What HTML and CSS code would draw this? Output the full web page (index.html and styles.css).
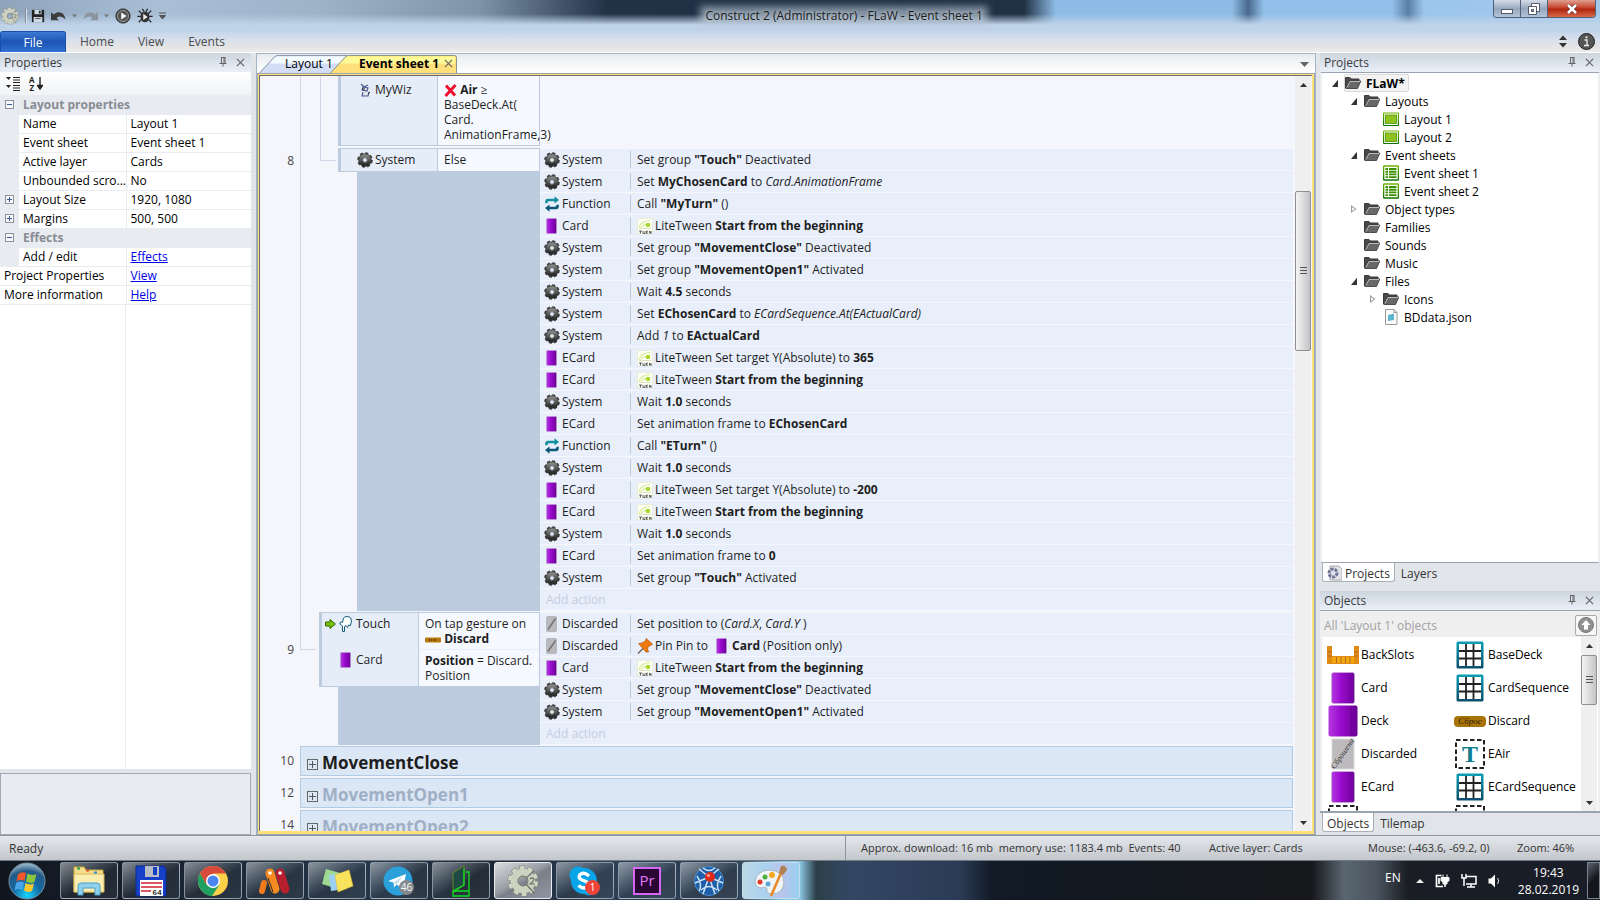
FILE: index.html
```html
<!DOCTYPE html>
<html lang="en">
<head>
    <meta charset="UTF-8">
    <meta name="viewport" content="width=device-width, initial-scale=1.0">
    <title>Construct 2 (Administrator) - FLaW - Event sheet 1</title>
    <link rel="stylesheet" href="styles.css">
</head>
<body>
    <!-- shared icons -->
    <svg class="sprite" width="0" height="0" aria-hidden="true">
        <defs>
            <linearGradient id="gPurple" x1="0" x2="1" y1="0" y2="0">
                <stop offset="0" stop-color="#b33be0"/>
                <stop offset="0.4" stop-color="#9c0ccf"/>
                <stop offset="1" stop-color="#6d0096"/>
            </linearGradient>
            <linearGradient id="gTeal" x1="0" x2="0" y1="0" y2="1">
                <stop offset="0" stop-color="#0aa0b4"/>
                <stop offset="1" stop-color="#0b4d6c"/>
            </linearGradient>
            <linearGradient id="gGear" x1="0" x2="0" y1="0" y2="1">
                <stop offset="0" stop-color="#858585"/>
                <stop offset="1" stop-color="#2c2c2c"/>
            </linearGradient>
            <linearGradient id="gGreen" x1="0" x2="0" y1="0" y2="1">
                <stop offset="0" stop-color="#6fb400"/>
                <stop offset="1" stop-color="#0f7400"/>
            </linearGradient>
            <radialGradient id="gOrb" cx="0.5" cy="0.9" r="0.9">
                <stop offset="0" stop-color="#18d4ff"/>
                <stop offset="0.45" stop-color="#1466a0"/>
                <stop offset="0.75" stop-color="#255a88"/>
                <stop offset="1" stop-color="#a8c0d2"/>
            </radialGradient>
        </defs>
        <symbol id="gear" viewBox="0 0 16 16">
            <circle cx="8" cy="8" r="6.7" fill="none" stroke="#3a3a3a" stroke-width="2.2" stroke-dasharray="3 2.26"/>
            <circle cx="8" cy="8" r="4.5" fill="none" stroke="url(#gGear)" stroke-width="4.2"/>
            <circle cx="8" cy="8" r="6.2" fill="none" stroke="#333" stroke-width="0.7"/>
            <circle cx="8" cy="8" r="2.2" fill="#e8eefa" stroke="#333" stroke-width="0.6"/>
        </symbol>
        <symbol id="gear-light" viewBox="0 0 32 32">
            <circle cx="16" cy="16" r="13" fill="none" stroke="#7d8275" stroke-width="5" stroke-dasharray="5.6 2.57"/>
            <circle cx="16" cy="16" r="13" fill="none" stroke="#d3d6c4" stroke-width="4" stroke-dasharray="4.6 3.57" stroke-dashoffset="-0.5"/>
            <circle cx="16" cy="16" r="8.5" fill="none" stroke="#cdd1bf" stroke-width="7.5"/>
            <circle cx="16" cy="16" r="5" fill="none" stroke="#6d7267" stroke-width="1"/>
            <path d="M19 13L27 6M19 19L27 28" stroke="#6c7168" stroke-width="1.2"/>
            <path d="M23 14q2-2 4 0q0 2-4 5h5" fill="none" stroke="#6d7267" stroke-width="1.2"/>
        </symbol>
        <symbol id="card" viewBox="0 0 16 16">
            <rect x="2.5" y="0.5" width="10" height="15" rx="1" fill="url(#gPurple)" stroke="#b99ac8" stroke-width="0.6"/>
        </symbol>
        <symbol id="function" viewBox="0 0 16 16">
            <path d="M1.2 7.2V5Q1.500 2.800 4 2.800H10.500V0.300L15 4L10.500 7.600V5.300H5Q3.500 5.300 3.500 7.200z" fill="#12909f"/>
            <path d="M14.800 8.800V11Q14.500 13.200 12 13.200H5.500V15.700L1 12L5.500 8.400V10.700H11Q12.500 10.700 12.500 8.800z" fill="#0c5878"/>
        </symbol>
        <symbol id="tween" viewBox="0 0 16 16">
            <rect x="0.5" y="0.5" width="15" height="15" fill="#fdfef6" stroke="#e3e8c5" stroke-dasharray="2 1"/>
            <path d="M2 9.500Q4 3 13 2.500" fill="none" stroke="#d5eb8e" stroke-width="1.2"/>
            <path d="M4 9.500Q6 6 10 6.500" fill="none" stroke="#c8e564"/>
            <rect x="9" y="5" width="4" height="4" rx="1" fill="#a6d92a"/>
            <path d="M2 10.500h12" stroke="#d5dcb5" stroke-width="0.8"/>
            <path d="M2 13h3M3.500 13v2.500M6 13v2.500h2V13M9.500 13.200H11M9.500 15.200H11M9.500 13v2.500M12.500 15.500V13l1.500 2.500V13" fill="none" stroke="#555" stroke-width="0.9"/>
        </symbol>
        <symbol id="discarded" viewBox="0 0 16 16">
            <rect x="2.5" y="0.5" width="10" height="15" rx="1" fill="#b9b9bd" stroke="#a5a5aa" stroke-width="0.6"/>
            <path d="M4 13.500L11.500 2.500" stroke="#707070" stroke-width="1.4"/>
        </symbol>
        <symbol id="pin" viewBox="0 0 16 16">
            <path d="M6.500 10L1 15.500" stroke="#6a5a50" stroke-width="1.3"/>
            <path d="M1.500 5.500L5 5L9 2.500V0.500L15.500 6L14 7.500L11.500 8L10.500 11L11.500 14L9 14z" fill="#ee7a10" stroke="#b34d04" stroke-width="0.7"/>
        </symbol>
        <symbol id="folder" viewBox="0 0 16 16">
            <path d="M0.500 13V2.500H5L6.500 4H14V6" fill="#4a4a4a" stroke="#3a3a3a"/>
            <path d="M0.800 13.500L4.500 6H15.800L12.500 13.500z" fill="#686868" stroke="#333" stroke-width="0.8"/>
            <path d="M1.800 12.500L5 6.500H15" fill="none" stroke="#d8d8d8" stroke-width="0.8"/>
        </symbol>
        <symbol id="layout" viewBox="0 0 16 16">
            <rect x="0.6" y="2" width="14.800" height="12.500" rx="0.5" fill="#fff" stroke="url(#gGreen)" stroke-width="1.2"/>
            <rect x="2.5" y="4" width="11" height="8.500" fill="#8fc31f" stroke="#4f9400" stroke-width="0.8"/>
        </symbol>
        <symbol id="sheet" viewBox="0 0 16 16">
            <rect x="0.6" y="1" width="14.800" height="14" rx="0.5" fill="#fff" stroke="url(#gGreen)" stroke-width="1.4"/>
            <path d="M2.500 4h2.500M6 4h7.500M2.500 6.700h2.500M6 6.700h7.500M2.500 9.400h2.500M6 9.400h7.500M2.500 12.100h2.500M6 12.100h7.500" stroke="#3d8f00" stroke-width="1.9"/>
        </symbol>
        <symbol id="file" viewBox="0 0 16 16">
            <path d="M2.500 0.500H11L14 3.500V15.500H2.500z" fill="#fbfbfb" stroke="#9a9a9a"/>
            <path d="M11 0.500V3.500H14" fill="none" stroke="#9a9a9a"/>
            <path d="M5 6l6-1.500v6.500l-6 1z" fill="#5db6cf"/>
        </symbol>
        <symbol id="pushpin" viewBox="0 0 8 10">
            <path d="M2.500 0.500V6M5 0.500V6M6 0.500V6M2 0.500H6.500M0.500 6.500H7.500M4 6.500V9.500" fill="none" stroke="#666" stroke-width="1"/>
        </symbol>
        <symbol id="cross" viewBox="0 0 10 10">
            <path d="M1 1L9 9M9 1L1 9" stroke="#666" stroke-width="1.3"/>
        </symbol>
        <symbol id="array" viewBox="0 0 28 28">
            <rect x="0.5" y="0.5" width="27" height="27" rx="1.5" fill="url(#gTeal)"/>
            <rect x="3" y="3" width="22" height="22" fill="#fff"/>
            <path d="M10 3V25M17.500 3V25M3 10H25M3 17.500H25" stroke="#222" stroke-width="1.8"/>
        </symbol>
        <symbol id="card-big" viewBox="0 0 32 32">
            <rect x="4.5" y="0.5" width="23" height="31" rx="2" fill="url(#gPurple)" stroke="#c9b3d4" stroke-width="0.6"/>
        </symbol>
    </svg>

    <div class="window">
        <header class="titlebar">
            <div class="quick">
                <svg class="app-gear" width="18" height="18"><use href="#gear-light"/></svg>
                <span class="quick-sep"></span>
                <button type="button" aria-label="Save"><svg width="14" height="14" viewBox="0 0 16 16"><path d="M1 1h14v14H1z" fill="#222"/><path d="M4 1h8v5H4zM3 9h10v6H3z" fill="#ccd8e4"/><path d="M9 2h2v3H9zM5 10.500h6v1H5z" fill="#222"/></svg></button>
                <button type="button" aria-label="Undo"><svg width="15" height="12" viewBox="0 0 16 12"><path d="M0 2v8.500h8.500L6 8Q10 4.500 15.500 9.500Q14 1.500 7.500 2Q5 2.200 3 4.500z" fill="#3c3c3c"/></svg></button>
                <button type="button" aria-label="Undo list"><svg width="5" height="4" viewBox="0 0 5 4"><path d="M0 0.500h5L2.500 3.500z" fill="#777"/></svg></button>
                <button type="button" aria-label="Redo"><svg width="15" height="12" viewBox="0 0 16 12"><path d="M16 2v8.500H7.500L10 8Q6 4.500 0.500 9.500Q2 1.500 8.500 2Q11 2.200 13 4.500z" fill="#8c959d"/></svg></button>
                <button type="button" aria-label="Redo list"><svg width="5" height="4" viewBox="0 0 5 4"><path d="M0 0.500h5L2.500 3.500z" fill="#777"/></svg></button>
                <button type="button" aria-label="Run"><svg width="16" height="16" viewBox="0 0 18 18"><circle cx="9" cy="9" r="8" fill="#555" stroke="#222"/><circle cx="9" cy="9" r="6.200" fill="none" stroke="#999"/><path d="M7 5L13 9L7 13z" fill="#fff"/></svg></button>
                <button type="button" aria-label="Debug"><svg width="16" height="16" viewBox="0 0 18 18"><path d="M2 3l4 4M16 3l-4 4M0.500 9.500H5M17.500 9.500H13M2 16l4-4M16 16l-4-4M6 1l2 3M12 1l-2 3" stroke="#222" stroke-width="1.3"/><ellipse cx="9" cy="10" rx="5" ry="6" fill="#333"/><path d="M7 6.500l5 3.500-5 3.500z" fill="#eee"/></svg></button>
                <button type="button" class="customize" aria-label="Customize"><svg width="7" height="8" viewBox="0 0 7 8"><path d="M0 1h7M0.500 3.500h6L3.500 7z" fill="#555" stroke="#555"/></svg></button>
            </div>
            <h1>Construct 2 (Administrator) - FLaW - Event sheet 1</h1>
            <div class="win-buttons">
                <button type="button" aria-label="Minimize"><svg width="12" height="12" viewBox="0 0 12 12"><rect x="0.5" y="6.5" width="11" height="4" fill="#fff" stroke="#555a6e"/></svg></button>
                <button type="button" aria-label="Restore"><svg width="12" height="12" viewBox="0 0 12 12"><path d="M3.500 0.500h8v8h-8z" fill="#fff" stroke="#555a6e"/><path d="M0.500 3.500h8v8h-8z" fill="#fff" stroke="#555a6e"/><path d="M3.500 6.500h2v2h-2z" fill="#8f99ad" stroke="#555a6e"/></svg></button>
                <button type="button" class="win-close" aria-label="Close"><svg width="12" height="10" viewBox="0 0 12 10"><path d="M2 1L10 9M10 1L2 9" stroke="#5b2b2b" stroke-width="4"/><path d="M2 1L10 9M10 1L2 9" stroke="#fff" stroke-width="2.6"/></svg></button>
            </div>
        </header>

        <nav class="ribbon">
            <button type="button" class="file-tab">File</button>
            <button type="button" class="ribbon-tab">Home</button>
            <button type="button" class="ribbon-tab">View</button>
            <button type="button" class="ribbon-tab">Events</button>
            <div class="ribbon-right">
                <svg width="8" height="13" viewBox="0 0 8 13"><path d="M0 5L4 0.500L8 5zM0 8L4 12.500L8 8z" fill="#333"/></svg>
                <button type="button" aria-label="About"><svg width="17" height="17" viewBox="0 0 17 17"><circle cx="8.500" cy="8.500" r="8" fill="#555" stroke="#222"/><path d="M6.500 7h2.500v5.500M6 12.500h5" fill="none" stroke="#eee" stroke-width="1.3"/><circle cx="8.500" cy="4.300" r="1.100" fill="#eee"/></svg></button>
            </div>
        </nav>

        <main class="workspace">
            <aside class="left">
                <div class="panel-head">
                    <h2>Properties</h2>
                    <button type="button" aria-label="Pin"><svg width="8" height="10"><use href="#pushpin"/></svg></button>
                    <button type="button" aria-label="Close"><svg width="9" height="9"><use href="#cross"/></svg></button>
                </div>
                <div class="prop-tools">
                    <button type="button" aria-label="Categorized"><svg width="15" height="15" viewBox="0 0 15 15"><path d="M0 1h5L2.500 4zM0 9h5L2.500 12z" fill="#222"/><path d="M7 1.500h7M7 4h7M7 6.500h7M7 9.500h7M7 12h7M7 14.500h7" stroke="#222" stroke-width="1.1"/></svg></button>
                    <button type="button" class="az" aria-label="Sort"><span>A<br>Z</span><svg width="6" height="13" viewBox="0 0 6 13"><path d="M3 0v10M0.500 8.500h5L3 12z" stroke="#222" stroke-width="1.4" fill="#222"/></svg></button>
                </div>
                <table class="props">
                    <colgroup><col class="col-toggle"><col class="col-name"><col></colgroup>
                    <tbody>
                        <tr class="group"><td class="tog"><i class="toggle minus"></i></td><th colspan="2">Layout properties</th></tr>
                        <tr><td class="tog"></td><th>Name</th><td>Layout 1</td></tr>
                        <tr><td class="tog"></td><th>Event sheet</th><td>Event sheet 1</td></tr>
                        <tr><td class="tog"></td><th>Active layer</th><td>Cards</td></tr>
                        <tr><td class="tog"></td><th>Unbounded scro...</th><td>No</td></tr>
                        <tr><td class="tog"><i class="toggle plus"></i></td><th>Layout Size</th><td>1920, 1080</td></tr>
                        <tr><td class="tog"><i class="toggle plus"></i></td><th>Margins</th><td>500, 500</td></tr>
                        <tr class="group"><td class="tog"><i class="toggle minus"></i></td><th colspan="2">Effects</th></tr>
                        <tr><td class="tog"></td><th>Add / edit</th><td><a href="#">Effects</a></td></tr>
                        <tr><th colspan="2">Project Properties</th><td><a href="#">View</a></td></tr>
                        <tr><th colspan="2">More information</th><td><a href="#">Help</a></td></tr>
                    </tbody>
                </table>
                <div class="props-rest"></div>
                <div class="props-help"></div>
            </aside>

            <section class="center">
                <div class="doc-tabs">
                    <button type="button" class="doc-tab">
                        <svg class="tab-shape" viewBox="0 0 88 19" preserveAspectRatio="none"><path d="M0.500 19L15 2.500Q17 0.500 19 0.500H88V19" fill="#d3def6" stroke="#8a93a5"/><path d="M14 5L17 1.500H88V9H10z" fill="#f4fbff"/></svg>
                        <span>Layout 1</span>
                    </button>
                    <button type="button" class="doc-tab active">
                        <svg class="tab-shape" viewBox="0 0 127 19" preserveAspectRatio="none"><path d="M0.500 19L15 2.500Q17 0.500 19 0.500H124.500Q126.500 0.500 126.500 2.500V19" fill="#ffe07a" stroke="#8a8f86"/><path d="M13 6L17 1.500H125V9H10z" fill="#fffb98"/></svg>
                        <span>Event sheet 1</span>
                        <svg class="tab-x" width="9" height="9"><use href="#cross"/></svg>
                    </button>
                    <button type="button" class="tab-list" aria-label="Tabs"><svg width="9" height="5" viewBox="0 0 9 5"><path d="M0 0h9L4.500 5z" fill="#666"/></svg></button>
                </div>
                <div class="doc-frame">
                    <div class="sheet">
                        <div class="event">
                            <div class="event-left">
                                <div class="event-head">
                                    <span class="num"></span><span class="rail"></span><span class="rail short"></span>
                                    <div class="conds cut">
                                        <div class="cond">
                                            <div class="obj"><svg width="16" height="16" viewBox="0 0 16 16"><path d="M4 2l3 3 4-2M6 5l5 1-1 3-5-1zM6 10l-1 4h6l1-4" fill="#dfe3ee" stroke="#4a5a8c" stroke-width="1.1"/><path d="M5 7h3M11 12l2-2" stroke="#222"/></svg>MyWiz</div>
                                            <div class="cond-text"><svg width="13" height="13" viewBox="0 0 13 13"><path d="M2 1.500L11 11.500M11.500 1L1.500 12" stroke="#f01030" stroke-width="3"/></svg> <b>Air</b> ≥<br>BaseDeck.At(<br>Card.<br>AnimationFrame,3)</div>
                                        </div>
                                    </div>
                                </div>
                            </div>
                        </div>

                        <div class="event">
                            <div class="event-left">
                                <div class="event-head">
                                    <span class="num">8</span><span class="rail"></span><span class="elbow"></span>
                                    <div class="conds">
                                        <div class="cond">
                                            <div class="obj"><svg width="16" height="16"><use href="#gear"/></svg>System</div>
                                            <div class="cond-text">Else</div>
                                        </div>
                                    </div>
                                </div>
                                <div class="event-fill deep"></div>
                            </div>
                            <ul class="actions">
                                <li><span class="obj"><svg width="16" height="16"><use href="#gear"/></svg>System</span><span class="act">Set group <b>"Touch"</b> Deactivated</span></li>
                                <li><span class="obj"><svg width="16" height="16"><use href="#gear"/></svg>System</span><span class="act">Set <b>MyChosenCard</b> to <i>Card.AnimationFrame</i></span></li>
                                <li><span class="obj"><svg width="16" height="16"><use href="#function"/></svg>Function</span><span class="act">Call <b>"MyTurn"</b> ()</span></li>
                                <li><span class="obj"><svg width="16" height="16"><use href="#card"/></svg>Card</span><span class="act"><svg width="16" height="16"><use href="#tween"/></svg>LiteTween <b>Start from the beginning</b></span></li>
                                <li><span class="obj"><svg width="16" height="16"><use href="#gear"/></svg>System</span><span class="act">Set group <b>"MovementClose"</b> Deactivated</span></li>
                                <li><span class="obj"><svg width="16" height="16"><use href="#gear"/></svg>System</span><span class="act">Set group <b>"MovementOpen1"</b> Activated</span></li>
                                <li><span class="obj"><svg width="16" height="16"><use href="#gear"/></svg>System</span><span class="act">Wait <b>4.5</b> seconds</span></li>
                                <li><span class="obj"><svg width="16" height="16"><use href="#gear"/></svg>System</span><span class="act">Set <b>EChosenCard</b> to <i>ECardSequence.At(EActualCard)</i></span></li>
                                <li><span class="obj"><svg width="16" height="16"><use href="#gear"/></svg>System</span><span class="act">Add <i>1</i> to <b>EActualCard</b></span></li>
                                <li><span class="obj"><svg width="16" height="16"><use href="#card"/></svg>ECard</span><span class="act"><svg width="16" height="16"><use href="#tween"/></svg>LiteTween Set target Y(Absolute) to <b>365</b></span></li>
                                <li><span class="obj"><svg width="16" height="16"><use href="#card"/></svg>ECard</span><span class="act"><svg width="16" height="16"><use href="#tween"/></svg>LiteTween <b>Start from the beginning</b></span></li>
                                <li><span class="obj"><svg width="16" height="16"><use href="#gear"/></svg>System</span><span class="act">Wait <b>1.0</b> seconds</span></li>
                                <li><span class="obj"><svg width="16" height="16"><use href="#card"/></svg>ECard</span><span class="act">Set animation frame to <b>EChosenCard</b></span></li>
                                <li><span class="obj"><svg width="16" height="16"><use href="#function"/></svg>Function</span><span class="act">Call <b>"ETurn"</b> ()</span></li>
                                <li><span class="obj"><svg width="16" height="16"><use href="#gear"/></svg>System</span><span class="act">Wait <b>1.0</b> seconds</span></li>
                                <li><span class="obj"><svg width="16" height="16"><use href="#card"/></svg>ECard</span><span class="act"><svg width="16" height="16"><use href="#tween"/></svg>LiteTween Set target Y(Absolute) to <b>-200</b></span></li>
                                <li><span class="obj"><svg width="16" height="16"><use href="#card"/></svg>ECard</span><span class="act"><svg width="16" height="16"><use href="#tween"/></svg>LiteTween <b>Start from the beginning</b></span></li>
                                <li><span class="obj"><svg width="16" height="16"><use href="#gear"/></svg>System</span><span class="act">Wait <b>1.0</b> seconds</span></li>
                                <li><span class="obj"><svg width="16" height="16"><use href="#card"/></svg>ECard</span><span class="act">Set animation frame to <b>0</b></span></li>
                                <li><span class="obj"><svg width="16" height="16"><use href="#gear"/></svg>System</span><span class="act">Set group <b>"Touch"</b> Activated</span></li>
                                <li><button type="button" class="add">Add action</button></li>
                            </ul>
                        </div>

                        <div class="event">
                            <div class="event-left">
                                <div class="event-head">
                                    <span class="num">9</span><span class="elbow long"></span>
                                    <div class="conds">
                                        <div class="cond">
                                            <div class="obj trigger"><svg class="arrow" width="11" height="10" viewBox="0 0 11 10"><path d="M0.500 3H5V0.500L10.500 5L5 9.500V7H0.500z" fill="#7cc010" stroke="#2f6b00"/></svg><svg width="16" height="16" viewBox="0 0 16 16"><path d="M4.500 15.500V10L2 8Q1.500 6 3.500 6L4.500 6.500L5.500 2Q6 0.500 10 0.500Q13.500 1 13.500 5L12.500 9.500L10.500 9L9.500 11.500L8 9.500L6.500 10.500V15.500z" fill="#fff" stroke="#175f7c"/></svg>Touch</div>
                                            <div class="cond-text">On tap gesture on<br><svg width="16" height="6" viewBox="0 0 16 6"><rect y="0.5" width="16" height="5" rx="1" fill="#b57a08"/><path d="M4 3h8" stroke="#4a3000" stroke-width="1.5" stroke-dasharray="1 1"/></svg> <b>Discard</b></div>
                                        </div>
                                        <div class="cond">
                                            <div class="obj"><svg width="16" height="16"><use href="#card"/></svg>Card</div>
                                            <div class="cond-text"><b>Position</b> = Discard.<br>Position</div>
                                        </div>
                                    </div>
                                </div>
                                <div class="event-fill"></div>
                            </div>
                            <ul class="actions">
                                <li><span class="obj"><svg width="16" height="16"><use href="#discarded"/></svg>Discarded</span><span class="act">Set position to (<i>Card.X</i>, <i>Card.Y</i> )</span></li>
                                <li><span class="obj"><svg width="16" height="16"><use href="#discarded"/></svg>Discarded</span><span class="act"><svg width="16" height="16"><use href="#pin"/></svg>Pin Pin to <svg class="mid" width="16" height="16"><use href="#card"/></svg> <b>Card</b> (Position only)</span></li>
                                <li><span class="obj"><svg width="16" height="16"><use href="#card"/></svg>Card</span><span class="act"><svg width="16" height="16"><use href="#tween"/></svg>LiteTween <b>Start from the beginning</b></span></li>
                                <li><span class="obj"><svg width="16" height="16"><use href="#gear"/></svg>System</span><span class="act">Set group <b>"MovementClose"</b> Deactivated</span></li>
                                <li><span class="obj"><svg width="16" height="16"><use href="#gear"/></svg>System</span><span class="act">Set group <b>"MovementOpen1"</b> Activated</span></li>
                                <li><button type="button" class="add">Add action</button></li>
                            </ul>
                        </div>

                        <div class="group-row"><span class="num">10</span><h3><i class="plus-box"></i>MovementClose</h3></div>
                        <div class="group-row off"><span class="num">12</span><h3><i class="plus-box"></i>MovementOpen1</h3></div>
                        <div class="group-row off"><span class="num">14</span><h3><i class="plus-box"></i>MovementOpen2</h3></div>
                    </div>
                    <div class="scroll">
                        <button type="button" aria-label="Up"><svg width="7" height="4" viewBox="0 0 7 4"><path d="M0 4L3.500 0L7 4z" fill="#333"/></svg></button>
                        <div class="track"><div class="thumb"><i></i></div></div>
                        <button type="button" aria-label="Down"><svg width="7" height="4" viewBox="0 0 7 4"><path d="M0 0L3.500 4L7 0z" fill="#333"/></svg></button>
                    </div>
                </div>
            </section>

            <aside class="right">
                <section class="projects">
                    <div class="panel-head">
                        <h2>Projects</h2>
                        <button type="button" aria-label="Pin"><svg width="8" height="10"><use href="#pushpin"/></svg></button>
                        <button type="button" aria-label="Close"><svg width="9" height="9"><use href="#cross"/></svg></button>
                    </div>
                    <ul class="tree">
                        <li class="root"><i class="tri open"></i><span><svg width="16" height="16"><use href="#folder"/></svg>FLaW*</span></li>
                        <li class="lv1"><i class="tri open"></i><span><svg width="16" height="16"><use href="#folder"/></svg>Layouts</span></li>
                        <li class="lv2"><i class="tri"></i><span><svg width="16" height="16"><use href="#layout"/></svg>Layout 1</span></li>
                        <li class="lv2"><i class="tri"></i><span><svg width="16" height="16"><use href="#layout"/></svg>Layout 2</span></li>
                        <li class="lv1"><i class="tri open"></i><span><svg width="16" height="16"><use href="#folder"/></svg>Event sheets</span></li>
                        <li class="lv2"><i class="tri"></i><span><svg width="16" height="16"><use href="#sheet"/></svg>Event sheet 1</span></li>
                        <li class="lv2"><i class="tri"></i><span><svg width="16" height="16"><use href="#sheet"/></svg>Event sheet 2</span></li>
                        <li class="lv1"><i class="tri shut"></i><span><svg width="16" height="16"><use href="#folder"/></svg>Object types</span></li>
                        <li class="lv1"><i class="tri"></i><span><svg width="16" height="16"><use href="#folder"/></svg>Families</span></li>
                        <li class="lv1"><i class="tri"></i><span><svg width="16" height="16"><use href="#folder"/></svg>Sounds</span></li>
                        <li class="lv1"><i class="tri"></i><span><svg width="16" height="16"><use href="#folder"/></svg>Music</span></li>
                        <li class="lv1"><i class="tri open"></i><span><svg width="16" height="16"><use href="#folder"/></svg>Files</span></li>
                        <li class="lv2"><i class="tri shut"></i><span><svg width="16" height="16"><use href="#folder"/></svg>Icons</span></li>
                        <li class="lv2"><i class="tri"></i><span><svg width="16" height="16"><use href="#file"/></svg>BDdata.json</span></li>
                    </ul>
                    <div class="pane-tabs">
                        <button type="button" class="on"><svg width="15" height="16" viewBox="0 0 15 16"><path d="M3 1h9l3 3v11H3z" fill="#e4e4e8" stroke="#aaa"/><circle cx="6" cy="8" r="4" fill="none" stroke="#6e7398" stroke-width="3" stroke-dasharray="3 1"/><circle cx="6" cy="8" r="1.500" fill="#dde"/></svg>Projects</button>
                        <button type="button">Layers</button>
                    </div>
                </section>

                <section class="objects">
                    <div class="panel-head">
                        <h2>Objects</h2>
                        <button type="button" aria-label="Pin"><svg width="8" height="10"><use href="#pushpin"/></svg></button>
                        <button type="button" aria-label="Close"><svg width="9" height="9"><use href="#cross"/></svg></button>
                    </div>
                    <div class="obj-body">
                        <div class="filter">
                            <span>All 'Layout 1' objects</span>
                            <button type="button" aria-label="Up one level"><svg width="16" height="16" viewBox="0 0 16 16"><circle cx="8" cy="8" r="7.500" fill="#909090" stroke="#777"/><path d="M8 3L12.500 8H10V12.500H6V8H3.500z" fill="#fff"/></svg></button>
                        </div>
                        <div class="obj-list">
                            <div class="obj-grid">
                                <div class="cell"><svg width="32" height="32" viewBox="0 0 32 32"><path d="M0 7H5V17H27V7H32V25H0z" fill="#e08c14"/><path d="M5 18H27V24H5z" fill="#f2a80c"/><path d="M9.500 18v6M14 18v6M18.500 18v6M23 18v6M0 13h5M27 13h5M0 17h5M27 17h5" stroke="#b06a30"/></svg>BackSlots</div>
                                <div class="cell"><svg width="32" height="32" viewBox="-2 -2 32 32"><use href="#array" width="28" height="28"/></svg>BaseDeck</div>
                                <div class="cell"><svg width="32" height="32"><use href="#card-big"/></svg>Card</div>
                                <div class="cell"><svg width="32" height="32" viewBox="-2 -2 32 32"><use href="#array" width="28" height="28"/></svg>CardSequence</div>
                                <div class="cell"><svg width="32" height="32" viewBox="0 0 32 32"><rect x="1.5" y="0.5" width="29" height="31" rx="2" fill="url(#gPurple)"/><path d="M24 1v30M27 1v30" stroke="#5d0085" stroke-width="0.8"/></svg>Deck</div>
                                <div class="cell"><svg width="32" height="32" viewBox="0 0 32 32"><rect y="11" width="32" height="11" rx="4" fill="#a87408"/><text x="16" y="19" class="sbros">Сброс</text></svg>Discard</div>
                                <div class="cell"><svg width="32" height="32" viewBox="0 0 32 32"><rect x="5" y="1" width="22" height="30" fill="#bcbabd" stroke="#d8d6d9"/><text x="16" y="18" class="sbros small" transform="rotate(-55 16 16)">Сброшена</text></svg>Discarded</div>
                                <div class="cell"><svg width="32" height="32" viewBox="0 0 32 32"><rect x="2" y="2" width="28" height="28" fill="none" stroke="#222" stroke-width="2" stroke-dasharray="4.500 2.500"/><text x="16" y="24" class="big-t">T</text></svg>EAir</div>
                                <div class="cell"><svg width="32" height="32"><use href="#card-big"/></svg>ECard</div>
                                <div class="cell"><svg width="32" height="32" viewBox="-2 -2 32 32"><use href="#array" width="28" height="28"/></svg>ECardSequence</div>
                                <div class="cell"><svg width="32" height="32" viewBox="0 0 32 32"><rect x="2" y="2" width="28" height="28" fill="none" stroke="#222" stroke-width="2" stroke-dasharray="4.500 2.500"/></svg></div>
                                <div class="cell"><svg width="32" height="32" viewBox="0 0 32 32"><rect x="2" y="2" width="28" height="28" fill="none" stroke="#222" stroke-width="2" stroke-dasharray="4.500 2.500"/></svg></div>
                            </div>
                            <div class="scroll">
                                <button type="button" aria-label="Up"><svg width="7" height="4" viewBox="0 0 7 4"><path d="M0 4L3.500 0L7 4z" fill="#333"/></svg></button>
                                <div class="track"><div class="thumb small"><i></i></div></div>
                                <button type="button" aria-label="Down"><svg width="7" height="4" viewBox="0 0 7 4"><path d="M0 0L3.500 4L7 0z" fill="#333"/></svg></button>
                            </div>
                        </div>
                    </div>
                    <div class="pane-tabs">
                        <button type="button" class="on">Objects</button>
                        <button type="button">Tilemap</button>
                    </div>
                </section>
            </aside>
        </main>

        <footer class="status">
            <span class="ready">Ready</span>
            <span class="stat memory">Approx. download: 16 mb&nbsp; memory use: 1183.4 mb&nbsp; Events: 40</span>
            <span class="stat layer">Active layer: Cards</span>
            <span class="stat mouse">Mouse: (-463.6, -69.2, 0)</span>
            <span class="stat zoom">Zoom: 46%</span>
        </footer>

        <div class="taskbar">
            <button type="button" class="start" aria-label="Start"><svg width="38" height="38" viewBox="0 0 38 38"><circle cx="19" cy="19" r="18" fill="url(#gOrb)" stroke="#7890a4"/><path d="M10 12q4-3 8-1l-1.500 8q-4-2-8 0.500z" fill="#f0582a"/><path d="M19.500 11.500q4 2.500 9 0.500l-2 8q-4 2-8.500-0.500z" fill="#8cc63a"/><path d="M8 21q4-2.500 8-0.500l-1.500 7.500q-4-2-8 0.500z" fill="#4aa5e8"/><path d="M17.500 21q4 2.500 8.500 0.500l-2 7.500q-4 2-8-0.500z" fill="#fcc72c"/></svg></button>
            <button type="button" class="task" aria-label="Explorer"><svg width="34" height="32" viewBox="0 0 34 32"><path d="M2 2h10l2 3h17v22H2z" fill="#f5df8c" stroke="#c9a43c"/><path d="M2 9h30v18H2z" fill="#fbeeb0" stroke="#d8b85a"/><path d="M5 3.500h3" stroke="#1ea03a" stroke-width="2"/><path d="M14 5.500h3" stroke="#e04a28" stroke-width="2"/><path d="M22 7.500h3" stroke="#2890e0" stroke-width="2"/><path d="M6 30V21Q6 18 9 18H25Q28 18 28 21V30H23V23H11V30z" fill="#8fd0ec" stroke="#4c9ec8"/></svg></button>
            <button type="button" class="task" aria-label="Total Commander"><svg width="32" height="32" viewBox="0 0 32 32"><path d="M1 1h28l2 3v27H1z" fill="#1740c8" stroke="#0c2a8c"/><path d="M10 1h14v11H10z" fill="#b8bcc4"/><path d="M18 2h4v8h-4z" fill="#1740c8"/><path d="M5 15h23v16H5z" fill="#fff"/><path d="M6 18h21M6 22h21M6 26h10" stroke="#d0202c" stroke-width="1.3"/><text x="22" y="30" class="t64">64</text></svg></button>
            <button type="button" class="task" aria-label="Chrome"><svg width="30" height="30" viewBox="0 0 30 30"><circle cx="15" cy="15" r="15" fill="#fdd04a"/><path d="M2 7.500A15 15 0 0 1 28 7.500H15L8.500 18.700z" fill="#d84a3c"/><path d="M2 7.500A15 15 0 0 0 14 30L21.500 18.700H8.500z" fill="#20a060"/><circle cx="15" cy="15" r="7" fill="#fff"/><circle cx="15" cy="15" r="5.500" fill="#4a85ee"/></svg></button>
            <button type="button" class="task" aria-label="Mail"><svg width="32" height="28" viewBox="0 0 32 28"><path d="M5 16L3 24" stroke="#ee7c1c" stroke-width="6" stroke-linecap="round"/><path d="M11 6L16 22" stroke="#f58a20" stroke-width="9" stroke-linecap="round"/><path d="M9 11L14 25" stroke="#2b2a2c" stroke-width="1"/><path d="M21 6L26 22" stroke="#b51f2e" stroke-width="9" stroke-linecap="round"/><circle cx="11" cy="6" r="1.800" fill="#fff"/><circle cx="21" cy="6" r="1.800" fill="#fff"/></svg></button>
            <button type="button" class="task" aria-label="Sticky notes"><svg width="34" height="28" viewBox="0 0 34 28"><path d="M6 2l14 4-5 15-13-4z" fill="#9fd890"/><path d="M9 8l14-2 2 16-14 2z" fill="#9cd0f2"/><path d="M15 8l14-5 4 16-15 6z" fill="#f8e45c" stroke="#e0c238" stroke-width="0.6"/></svg></button>
            <button type="button" class="task" aria-label="Telegram"><svg width="32" height="30" viewBox="0 0 32 30"><circle cx="15" cy="15" r="14.500" fill="#2ba0da"/><path d="M5 15L23 8L20 23L13.500 18.500L11 21.500L10.500 16.500z" fill="#fff"/><path d="M10.500 16.500L20 10L13.500 18.500" fill="#c5dfee"/></svg><span class="badge grey">46</span></button>
            <button type="button" class="task" aria-label="Books"><svg width="20" height="32" viewBox="0 0 20 32"><path d="M2 8L13 1V20L2 28z" fill="#1f4a44" stroke="#5a8a20"/><path d="M15 7h3v19H2l11-6V4M2 26v5h16v-5" fill="none" stroke="#10e020" stroke-width="1.3"/></svg></button>
            <button type="button" class="task lit" aria-label="Construct 2"><svg width="32" height="32"><use href="#gear-light"/></svg></button>
            <button type="button" class="task" aria-label="Skype"><svg width="32" height="30" viewBox="0 0 32 30"><circle cx="9" cy="9" r="8.500" fill="#0aa5e8"/><circle cx="20" cy="21" r="8.500" fill="#0aa5e8"/><circle cx="15" cy="15" r="13" fill="#0aa5e8"/><path d="M20 10Q15 5.500 11 8.500Q8.500 12 13 14L17 15.500Q21 18 18 21Q14 23.500 9.500 19.500" fill="none" stroke="#fff" stroke-width="3.4"/></svg><span class="badge red">1</span></button>
            <button type="button" class="task" aria-label="Premiere"><span class="pr">Pr</span></button>
            <button type="button" class="task" aria-label="Browser"><svg width="32" height="32" viewBox="0 0 32 32"><circle cx="16" cy="16" r="14.500" fill="#1c5ea8" stroke="#4a8fd0"/><path d="M16 12L6 4M16 12L26 4M16 12L2 18M16 12L30 18M16 12L10 29M16 12L22 29M4 11Q10 20 6 26M28 11Q22 20 26 26M8 25Q16 18 24 25M10 3Q16 8 22 3" fill="none" stroke="#cfe2f4" stroke-width="1.5"/><circle cx="17" cy="12" r="5" fill="#e02818"/><circle cx="15.500" cy="10.500" r="1.600" fill="#ff9a8a"/></svg></button>
            <button type="button" class="task paint" aria-label="Paint"><svg width="34" height="32" viewBox="0 0 34 32"><path d="M14 5Q30 5 30 18Q29 29 17 29Q12 28 13 24Q12 21 8 23Q1 23 1 16Q3 6 14 5z" fill="#eef4f8" stroke="#a8b4c0"/><circle cx="6" cy="17" r="2.500" fill="#e03a28"/><circle cx="11" cy="12" r="2.500" fill="#4eb03a"/><circle cx="18" cy="10" r="3" fill="#f5a81c"/><circle cx="14" cy="19" r="2.500" fill="#5aa8d8"/><path d="M17 31L27 8" stroke="#e88a28" stroke-width="2.6"/><path d="M25 8L27 1Q32 0 33 5L29 10z" fill="#b08050"/></svg></button>
            <div class="tray">
                <span class="lang">EN</span>
                <svg width="8" height="4" viewBox="0 0 8 4"><path d="M0 4L4 0L8 4z" fill="#eee"/></svg>
                <svg width="15" height="15" viewBox="0 0 15 15"><path d="M6.500 2.500H1.500V13.500H8M4 5v6" fill="none" stroke="#fff" stroke-width="1.7"/><path d="M6 4.500h8v3l-2 2v1.500h-4v-1.500L6 7.500zM8 1.500v3M12 1.500v3" fill="#fff" stroke="#fff"/><path d="M10 10v4" stroke="#fff" stroke-width="1.5"/></svg>
                <svg width="16" height="15" viewBox="0 0 16 15"><path d="M5.500 3.500H15V11H5M10 11v3M6 14h8M1 1v4h4V1M3 5v8" fill="none" stroke="#fff" stroke-width="1.5"/></svg>
                <svg width="13" height="14" viewBox="0 0 13 14"><path d="M0.500 4.500H3L7 0.500V13.500L3 9.500H0.500z" fill="#fff"/><path d="M9.500 4Q12 7 9.500 10" fill="none" stroke="#ddd"/></svg>
                <div class="clock"><time>19:43</time><time>28.02.2019</time></div>
                <button type="button" class="show-desktop" aria-label="Show desktop"></button>
            </div>
        </div>
    </div>
</body>
</html>
```
FILE: styles.css
```css
* {
    box-sizing: border-box;
}

body {
    margin: 0;
    font-family: "Open Sans", "Noto Sans", sans-serif;
    font-size: 12px;
    line-height: 15px;
    color: #1e1e1e;
    background-color: #dfe3e8;
}

button {
    margin: 0;
    padding: 0;
    border: none;
    background: none;
    font: inherit;
    color: inherit;
    cursor: pointer;
}

h1, h2, h3, ul {
    margin: 0;
    padding: 0;
    font-size: 12px;
    font-weight: normal;
    list-style: none;
}

svg {
    display: block;
    flex-shrink: 0;
}

.sprite {
    position: absolute;
}

.window {
    display: flex;
    flex-direction: column;
    height: 100vh;
    overflow: hidden;
    background-color: #e1e5e9;
}

/* title bar and ribbon */

.titlebar {
    display: grid;
    grid-template-columns: 8fr auto 7fr;
    height: 31px;
    background:
        linear-gradient(to bottom, rgba(199, 217, 236, 0) 45%, #bfd3e9 80%),
        linear-gradient(to right, #8fa4bb 0, #a9bfd6 10%, #9eb2c8 20%, #7e92a8 30%, #203246 38%, #1f3144 64%, #8fbce6 66%, #8fbce6 77%, #48698c 78%, #92c0ea 79%, #92c0ea 87%, #5a80a8 88%, #9cc6ee 89%, #a4c8ea 100%);
}

.quick {
    display: flex;
    align-items: center;
    gap: 6px;
    padding-left: 1px;
}

.quick-sep {
    width: 2px;
    height: 14px;
    margin-right: -2px;
    border-left: 1px solid #7d8a98;
    border-right: 1px solid #dce5ee;
}

.titlebar h1 {
    align-self: center;
    color: #1b1b1b;
    line-height: 10px;
    background: rgba(190, 203, 217, 0.6);
    box-shadow: 0 0 7px 5px rgba(190, 203, 217, 0.6);
    text-shadow: 0 0 4px #d7e1ec;
}

.win-buttons {
    display: flex;
    justify-self: end;
    align-self: start;
    height: 18px;
    margin-right: 4px;
    border: 1px solid #50607a;
    border-top: none;
    border-radius: 0 0 4px 4px;
    overflow: hidden;
}

.win-buttons button {
    display: grid;
    place-items: center;
    width: 27px;
    background: linear-gradient(#d4dde8, #98a8bc 50%, #b4c4d8);
    border-right: 1px solid #50607a;
}

.win-buttons .win-close {
    width: 47px;
    border-right: none;
    background: linear-gradient(#e0a090, #c8442c 45%, #b02810 55%, #d86848);
}

.ribbon {
    display: flex;
    align-items: flex-end;
    height: 22px;
    background: linear-gradient(#c3d5ea, #d9e1ec 45%, #e4e4e4 75%, #ececec);
    border-bottom: 1px solid #fff;
    color: #4b4b4b;
}

.ribbon button {
    height: 21px;
}

.ribbon .file-tab {
    width: 66px;
    border: 1px solid #1a4fae;
    border-bottom: none;
    border-radius: 3px 3px 0 0;
    background: linear-gradient(#3c7ad4, #1d54b4 50%, #2f72d2);
    color: #fff;
}

.ribbon-tab {
    padding: 0 12px;
}

.file-tab + .ribbon-tab {
    padding-left: 14px;
}

.ribbon-right {
    display: flex;
    align-items: center;
    gap: 11px;
    margin-left: auto;
    padding-right: 5px;
}

/* panels */

.workspace {
    display: grid;
    grid-template-columns: 251px 1fr 280px;
    flex: 1;
    min-height: 0;
    background-color: #e1e5e9;
}

.left, .right, .center, .projects, .objects {
    display: flex;
    flex-direction: column;
    min-width: 0;
    min-height: 0;
}

.panel-head {
    display: flex;
    align-items: center;
    gap: 9px;
    height: 19px;
    padding: 0 6px 1px 4px;
    background: linear-gradient(#ccd4de, #e9f0f9);
    color: #3c3c3c;
}

.panel-head h2 {
    margin-right: auto;
}

.prop-tools {
    display: flex;
    align-items: center;
    gap: 8px;
    height: 23px;
    padding-left: 6px;
    background: linear-gradient(#fff, #f0f2f5);
}

.az {
    display: flex;
    align-items: center;
    gap: 2px;
    font-size: 8px;
    font-weight: bold;
    line-height: 8px;
}

.props {
    width: 100%;
    border-collapse: collapse;
    table-layout: fixed;
    background-color: #fff;
    color: #000;
}

.col-toggle {
    width: 19px;
}

.col-name {
    width: 107px;
}

.props td, .props th {
    height: 19px;
    padding: 0 4px;
    border-bottom: 1px solid #e8ebf0;
    font-weight: normal;
    text-align: left;
    white-space: nowrap;
}

.props th {
    border-right: 1px solid #e8ebf0;
}

.props td.tog {
    padding: 0 5px;
    background-color: #e8ebf0;
}

.props .group th {
    background-color: #e8ebf0;
    color: #888c94;
    font-weight: bold;
}

.props a {
    color: #0000e8;
}

.toggle {
    display: block;
    width: 9px;
    height: 9px;
    border: 1px solid #8e939b;
    background: linear-gradient(#3d5a9a, #3d5a9a) center / 5px 1px no-repeat, #f6f8fa;
}

.toggle.plus {
    background: linear-gradient(#3d5a9a, #3d5a9a) center / 5px 1px no-repeat, linear-gradient(#3d5a9a, #3d5a9a) center / 1px 5px no-repeat, #f6f8fa;
}

.props-rest {
    flex: 1;
    background: linear-gradient(to right, #fff 125px, #e8ebf0 125px, #e8ebf0 126px, #fff 126px);
}

.props-help {
    height: 62px;
    margin-top: 4px;
    border: 1px solid #a3a9b2;
    background-color: #e8ebf0;
}

/* document area */

.center {
    margin: 0 4px 0 5px;
    border: 1px solid #a3b4c8;
    border-bottom: none;
}

.doc-tabs {
    display: flex;
    align-items: flex-end;
    height: 19px;
    padding-left: 2px;
    background: linear-gradient(#e8ebef, #fff);
    color: #000;
}

.doc-tab {
    display: flex;
    align-items: center;
    position: relative;
    width: 88px;
    height: 18px;
    padding-left: 26px;
    padding-bottom: 2px;
}

.doc-tab.active {
    width: 127px;
    margin-left: -17px;
    padding-left: 29px;
    font-weight: bold;
}

.doc-tab span, .doc-tab .tab-x {
    position: relative;
    white-space: nowrap;
}

.doc-tab .tab-x {
    margin-left: auto;
    margin-right: 4px;
}

.tab-shape {
    position: absolute;
    inset: 0;
    width: 100%;
    height: 100%;
}

.tab-list {
    height: 18px;
    margin-left: auto;
    padding: 0 6px;
}

.doc-frame {
    display: flex;
    flex: 1;
    min-height: 0;
    border: 2px solid #ffe17a;
    border-width: 2px 3px 4px 2px;
    outline: 1px solid #9aa3b0;
    outline-offset: -1px;
    box-shadow: inset 1px 1px 0 #6e6a70;
    padding: 1px 1px 0 1px;
    background-color: #f5f6fc;
}

.sheet {
    flex: 1;
    min-width: 0;
    overflow: hidden;
    padding-right: 2px;
    background-color: #f5f6fc;
}

.event {
    display: flex;
    margin-bottom: 1px;
}

.event-left {
    display: flex;
    flex-direction: column;
    flex: 0 0 280px;
    min-width: 0;
}

.event-head {
    display: flex;
    padding-bottom: 1px;
}

.num {
    flex: 0 0 40px;
    align-self: center;
    padding-right: 6px;
    text-align: right;
    color: #444;
}

.rail {
    flex: 0 0 20px;
    margin-bottom: -2px;
    border-left: 1px solid #d3d7e8;
}

.rail.short {
    flex-basis: 18px;
}

.elbow {
    flex: 0 0 18px;
    background: linear-gradient(#d3d7e8, #d3d7e8) left top / 1px 50% no-repeat, linear-gradient(#d3d7e8, #d3d7e8) left center / 16px 1px no-repeat;
}

.elbow.long {
    flex-basis: 19px;
}

.conds {
    flex: 1;
    min-width: 0;
    border: 1px solid #bdcbdf;
    border-left-width: 3px;
    background-color: #e5edf8;
}

.conds.cut {
    border-top: none;
}

.cond {
    display: flex;
}

.cond .obj {
    flex: 0 0 96px;
    align-self: stretch;
    align-items: flex-start;
    padding: 3px 0 3px 16px;
}

.obj {
    display: flex;
    align-items: center;
    gap: 2px;
}

.trigger {
    position: relative;
}

.trigger .arrow {
    position: absolute;
    left: 3px;
    top: 6px;
}

.cond-text {
    flex: 1;
    min-width: 0;
    padding: 3px 0 3px 6px;
    border-left: 1px solid #bdcbdf;
    background-color: #f5f9ff;
    white-space: nowrap;
}

.cut .cond-text, .cut .obj {
    padding-top: 6px;
}

.cond + .cond .cond-text {
    border-top: 1px solid #e5edf8;
}

.cond-text svg {
    display: inline-block;
    vertical-align: middle;
}

.event-fill {
    flex: 1;
    margin-top: -1px;
    margin-left: 78px;
    background-color: #bdcbdf;
}

.event-fill.deep {
    position: relative;
    margin-left: 97px;
}

.event-fill.deep::before {
    content: "";
    position: absolute;
    left: -57px;
    top: 0;
    bottom: -2px;
    border-left: 1px solid #d3d7e8;
}

.actions {
    flex: 1;
    min-width: 0;
    padding-top: 1px;
}

.actions li {
    display: flex;
    align-items: center;
    height: 22px;
    padding-left: 4px;
    background-color: #e8effb;
    border-bottom: 1px solid #f5f7fd;
}

.actions .obj {
    flex: 0 0 87px;
    height: 17px;
    border-right: 1px solid #bdcbdf;
}

.act {
    display: flex;
    align-items: center;
    padding-left: 6px;
    white-space: pre;
}

.act svg {
    margin-right: 2px;
}

.act svg.mid {
    margin-left: 3px;
}

.add {
    padding-left: 2px;
    color: #c3cde2;
}

.group-row {
    display: flex;
    height: 30px;
    margin-bottom: 2px;
}

.group-row .num {
    padding-bottom: 1px;
}

.group-row h3 {
    display: flex;
    align-items: center;
    flex: 1;
    gap: 4px;
    padding: 4px 6px 0;
    border: 1px solid #b3cce6;
    background-color: #dce7f5;
    font-size: 17px;
    line-height: 24px;
    font-weight: bold;
}

.group-row.off h3 {
    color: #9fafc5;
}

.plus-box {
    width: 11px;
    height: 11px;
    margin-top: 3px;
    border: 1px solid #666;
    background: linear-gradient(#555, #555) center / 7px 1px no-repeat, linear-gradient(#555, #555) center / 1px 7px no-repeat;
}

.scroll {
    display: flex;
    flex-direction: column;
    flex: 0 0 16px;
    background-color: #efefef;
}

.scroll button {
    display: grid;
    place-items: center;
    height: 17px;
}

.track {
    flex: 1;
}

.thumb {
    display: grid;
    place-items: center;
    height: 160px;
    margin-top: 98px;
    border: 1px solid #8f8f8f;
    border-radius: 2px;
    background: linear-gradient(to right, #f4f4f4, #dcdcdc 50%, #c4c4c8);
}

.thumb.small {
    height: 50px;
    margin-top: 1px;
}

.thumb i {
    width: 7px;
    height: 8px;
    background: repeating-linear-gradient(#555 0, #555 1px, transparent 1px, transparent 3px);
}

/* right side */

.right {
    gap: 9px;
}

.projects {
    flex: 1;
}

.tree {
    flex: 1;
    padding: 1px 0 0 10px;
    border: 2px solid #eceef1;
    border-top: 1px solid #9aa3b0;
    border-bottom: 1px solid #9aa3b0;
    background-color: #fff;
    color: #000;
}

.tree li {
    display: flex;
    align-items: center;
    gap: 6px;
    height: 18px;
}

.tree span {
    display: flex;
    align-items: center;
    gap: 5px;
    padding: 0 3px 0 1px;
}

.tree .root span {
    border: 1px solid #d9d9d9;
    border-radius: 2px;
    padding-left: 0;
    background-color: #f3f3f3;
    font-weight: bold;
}

.tree .lv1 {
    padding-left: 19px;
}

.tree .lv2 {
    padding-left: 38px;
}

.tri {
    width: 6px;
    height: 8px;
}

.tri.open {
    background-color: #333;
    clip-path: polygon(100% 10%, 100% 100%, 0 100%);
}

.tri.shut {
    background-color: #999;
    clip-path: polygon(0 0, 90% 50%, 0 100%, 0 0, 18% 25%, 18% 75%, 65% 50%, 18% 25%);
}

.pane-tabs {
    display: flex;
    height: 19px;
    padding-left: 2px;
    color: #333;
}

.pane-tabs button {
    display: flex;
    align-items: center;
    gap: 3px;
    height: 19px;
    padding: 2px 6px 0;
}

.pane-tabs .on {
    padding: 2px 4px 0;
    border: 1px solid #aab0b8;
    border-top: none;
    border-radius: 0 0 3px 3px;
    background-color: #fff;
}

.objects {
    height: 244px;
}

.objects .pane-tabs {
    height: 22px;
}

.obj-body {
    display: flex;
    flex-direction: column;
    flex: 1;
    min-height: 0;
    padding: 2px 2px 0;
    border: 1px solid #9aa3b0;
    border-width: 1px 0 2px;
    background-color: #efefef;
}

.filter {
    display: flex;
    align-items: center;
    justify-content: space-between;
    height: 24px;
    padding: 0 1px 0 2px;
    color: #a2a2a2;
}

.filter button {
    display: grid;
    place-items: center;
    width: 22px;
    height: 21px;
    border: 1px solid #aaa;
    border-radius: 2px;
    background-color: #f7f7f7;
}

.obj-list {
    display: flex;
    flex: 1;
    min-height: 0;
    overflow: hidden;
    background-color: #fff;
}

.obj-grid {
    display: grid;
    grid-template-columns: 1fr 1fr;
    grid-auto-rows: 33px;
    flex: 1;
    align-content: start;
    padding: 1px 0 0 5px;
    color: #000;
}

.obj-list .scroll {
    margin-right: 1px;
}

.cell {
    display: flex;
    align-items: center;
    gap: 2px;
    white-space: nowrap;
}

.sbros {
    font: italic 9px "Liberation Serif", serif;
    text-anchor: middle;
    fill: #2c1c00;
}

.sbros.small {
    font-size: 8px;
    fill: #333;
}

.big-t {
    font: bold 24px "Liberation Serif", serif;
    text-anchor: middle;
    fill: #0c7c92;
}

/* status bar */

.status {
    display: flex;
    align-items: center;
    height: 25px;
    padding-left: 9px;
    border-top: 1px solid #8e959e;
    background: linear-gradient(#e4e7eb, #c3c7cc);
    color: #333;
}

.ready {
    flex: 1;
}

.stat {
    flex: none;
    font-size: 11px;
    line-height: 24px;
    white-space: nowrap;
}

.memory {
    width: 364px;
    padding-left: 15px;
    border-left: 1px solid #8e959e;
}

.layer {
    width: 159px;
}

.mouse {
    width: 149px;
}

.zoom {
    width: 83px;
}

/* taskbar */

.taskbar {
    display: flex;
    align-items: stretch;
    gap: 4px;
    height: 40px;
    padding: 1px 0;
    border-top: 1px solid #6e7a86;
    background: linear-gradient(to right, #10161f 0, #18222f 10%, #26384c 24%, #1a2430 30%, #2d4058 38%, #2b3c50 46%, #7fc8ec 49%, #8cc6e2 50%, #2c4048 51%, #334764 53%, #2b3b55 60%, #111a26 62%, #15181c 78%, #17181c 82%, #5a6670 84%, #4a545e 86%, #1a1d24 88%, #181d28 100%);
    color: #fff;
}

.start {
    display: grid;
    place-items: center;
    width: 56px;
}

.start svg {
    margin-right: 2px;
}

.task {
    display: grid;
    place-items: center;
    position: relative;
    width: 58px;
    border: 1px solid rgba(200, 210, 220, 0.6);
    border-radius: 3px;
    background: linear-gradient(150deg, rgba(210, 215, 220, 0.6), rgba(120, 130, 140, 0.35) 40%, rgba(60, 65, 72, 0.3) 55%, rgba(80, 86, 94, 0.3));
}

.task.lit {
    border-color: #e8ecf0;
    background: linear-gradient(150deg, #d8dcde, #9a9fa6 45%, #7a808a 55%, #9097a2);
}

.task.paint {
    border-color: #c8dce8;
    background: linear-gradient(to right, #bcd8e6, #a9d2ef 40%, #b9c4ec 70%, #98d0f0);
}

.badge {
    position: absolute;
    right: 13px;
    bottom: 3px;
    height: 15px;
    min-width: 15px;
    border-radius: 8px;
    font-size: 10px;
    text-align: center;
}

.badge.grey {
    background-color: #85898d;
}

.badge.red {
    background-color: #f04438;
}

.pr {
    width: 28px;
    height: 28px;
    border: 2px solid #d568f0;
    background-color: #2a0634;
    color: #e37cf8;
    font-size: 15px;
    line-height: 22px;
}

.t64 {
    font: bold 8px "Liberation Mono", monospace;
    text-anchor: middle;
    fill: #333;
}

.tray {
    display: flex;
    align-items: center;
    gap: 11px;
    margin-left: auto;
}

.lang {
    margin: 0 4px 6px 0;
}

.clock {
    display: flex;
    flex-direction: column;
    gap: 2px;
    margin-left: 6px;
    margin-right: -3px;
    text-align: center;
}

.show-desktop {
    align-self: stretch;
    width: 13px;
    border: 1px solid #7c858f;
    background: linear-gradient(135deg, #5a6270, #14161c 50%);
}
```
